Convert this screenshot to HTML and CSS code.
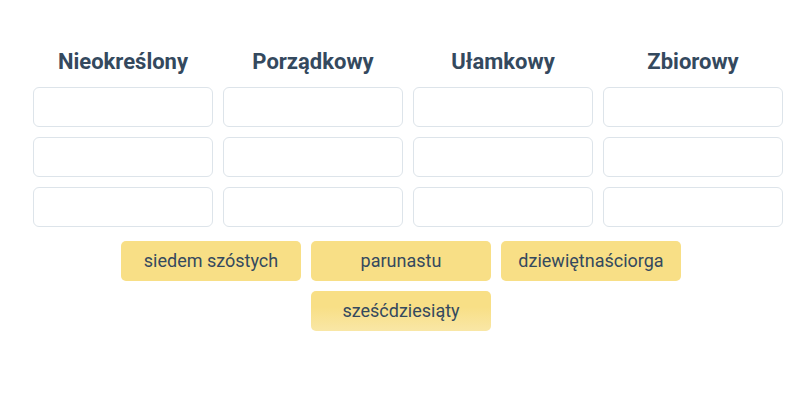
FILE: index.html
```html
<!DOCTYPE html>
<html lang="pl">
<head>
    <meta charset="UTF-8">
    <meta name="viewport" content="width=device-width, initial-scale=1.0">
    <title>Liczebniki</title>
    <link rel="stylesheet" href="styles.css">
</head>
<body>
<div class="board">
    <div class="column">
        <h2>Nieokreślony</h2>
        <div class="slot"></div>
        <div class="slot"></div>
        <div class="slot"></div>
    </div>
    <div class="column">
        <h2>Porządkowy</h2>
        <div class="slot"></div>
        <div class="slot"></div>
        <div class="slot"></div>
    </div>
    <div class="column">
        <h2>Ułamkowy</h2>
        <div class="slot"></div>
        <div class="slot"></div>
        <div class="slot"></div>
    </div>
    <div class="column">
        <h2>Zbiorowy</h2>
        <div class="slot"></div>
        <div class="slot"></div>
        <div class="slot"></div>
    </div>
</div>
<div class="bank">
    <div class="chip">siedem szóstych</div>
    <div class="chip">parunastu</div>
    <div class="chip">dziewiętnaściorga</div>
    <div class="chip fading">sześćdziesiąty</div>
</div>
</body>
</html>
```

FILE: styles.css
```css
body {
    font-family: Roboto, "Liberation Sans", sans-serif;
    margin: 0;
    padding: 0;
    background-color: #fff;
    color: #34495e;
}
.board {
    display: grid;
    grid-template-columns: repeat(4, 180px);
    column-gap: 10px;
    padding: 47px 0 0 33px;
}
.column {
    display: flex;
    flex-direction: column;
    gap: 10px;
}
.column h2 {
    margin: 0;
    font-size: 22px;
    font-weight: 700;
    line-height: 30px;
    text-align: center;
    color: #34495e;
}
.slot {
    height: 38px;
    border: 1px solid #dde4ea;
    border-radius: 6px;
    background: #fff;
}
.bank {
    display: flex;
    flex-wrap: wrap;
    justify-content: center;
    gap: 10px;
    width: 560px;
    margin: 14px 0 0 121px;
}
.chip {
    width: 180px;
    height: 40px;
    line-height: 40px;
    text-align: center;
    font-size: 18px;
    background-color: #f8df86;
    border-radius: 5px;
    color: #34495e;
}
.chip.fading {
    background: linear-gradient(to bottom, #f8df86 40%, #f9e7a6 100%);
}
```
